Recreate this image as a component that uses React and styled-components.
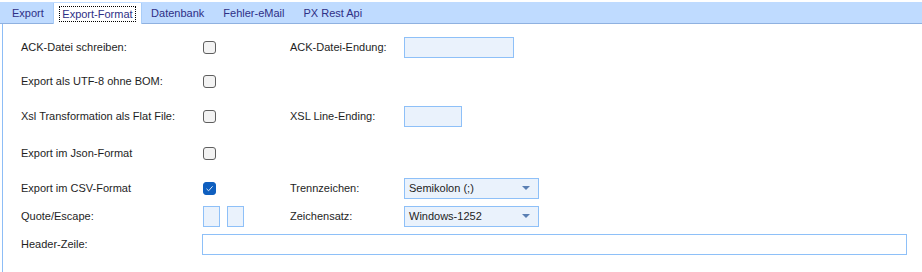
import React from 'react';
import styled, { createGlobalStyle } from 'styled-components';

const GlobalStyle = createGlobalStyle`
    html, body {
        margin:0;
        padding:0;
        background:#fff;
    }
    body {
        font-family: 'Liberation Sans', Arial, sans-serif;
        font-size:11px;
        color:#1e1e1e;
    }
`;

const tabs = ['Export', 'Export-Format', 'Datenbank', 'Fehler-eMail', 'PX Rest Api'];

const Checkbox = ({ checked }) => (
    <CheckBox checked={checked}>
        {checked && (
            <svg width="9" height="9" viewBox="0 0 9 9">
                <path d="M1.5 4.8 L3.6 6.8 L7.6 2.3" fill="none" stroke="#dbe8f8" strokeWidth="1" />
            </svg>
        )}
    </CheckBox>
);

const Select = ({ value }) => (
    <SelectBox>
        <span>{value}</span>
        <Arrow />
    </SelectBox>
);

const App = () => {
    return (
        <Page>
            <GlobalStyle />
            <TabStrip>
                {tabs.map((t) => (
                    <Tab key={t} active={t === 'Export-Format'}>
                        <TabLabel active={t === 'Export-Format'}>{t}</TabLabel>
                    </Tab>
                ))}
            </TabStrip>
            <Panel>
                <Form>
                    <Label>ACK-Datei schreiben:</Label>
                    <Cell><Checkbox /></Cell>
                    <Label>ACK-Datei-Endung:</Label>
                    <Cell><TextBox width="110px" /></Cell>

                    <Label>Export als UTF-8 ohne BOM:</Label>
                    <Cell><Checkbox /></Cell>
                    <span />
                    <span />

                    <Label>Xsl Transformation als Flat File:</Label>
                    <Cell><Checkbox /></Cell>
                    <Label>XSL Line-Ending:</Label>
                    <Cell><TextBox width="58px" /></Cell>

                    <Label>Export im Json-Format</Label>
                    <Cell><Checkbox /></Cell>
                    <span />
                    <span />

                    <Label>Export im CSV-Format</Label>
                    <Cell><Checkbox checked /></Cell>
                    <Label>Trennzeichen:</Label>
                    <Cell><Select value="Semikolon (;)" /></Cell>

                    <Label>Quote/Escape:</Label>
                    <Cell>
                        <SmallBoxes>
                            <TextBox width="17px" />
                            <TextBox width="17px" />
                        </SmallBoxes>
                    </Cell>
                    <Label>Zeichensatz:</Label>
                    <Cell><Select value="Windows-1252" /></Cell>

                    <Label>Header-Zeile:</Label>
                    <WideCell><TextBox width="705px" white /></WideCell>
                </Form>
            </Panel>
        </Page>
    );
};

const Page = styled.div`
    width:922px;
    height:272px;
    display:flex;
    flex-direction:column;
    overflow:hidden;
`;
const TabStrip = styled.div`
    margin-top:2px;
    height:21px;
    padding-left:2.5px;
    display:flex;
    align-items:stretch;
    background:#bfdbff;
    border-bottom:1px solid #8fb1e0;
`;
const Tab = styled.div`
    padding:0 9px;
    padding:0 ${props => props.active ? '9px' : '9.5px'};
    display:flex;
    align-items:center;
    color:#2e2f86;
    background:${props => props.active ? '#fff' : 'transparent'};
    border-left:${props => props.active ? '1px solid #a9cdf8' : 'none'};
    border-right:${props => props.active ? '1px solid #a9cdf8' : 'none'};
    margin:${props => props.active ? '1px 0 -1px 0' : '0'};
`;
const TabLabel = styled.span`
    padding:${props => props.active ? '1px 2px' : '0'};
    margin:${props => props.active ? '0 -3px' : '0'};
    outline:${props => props.active ? '1px dotted #000' : 'none'};
`;
const Panel = styled.div`
    flex:1;
    margin-left:2px;
    border-left:1px solid #8dbdf6;
    padding-top:6px;
`;
const Form = styled.div`
    display:grid;
    grid-template-columns:182px 87px 114px 1fr;
    grid-template-rows:34px 34px 36px 38px 32px 24px 32px;
    padding-left:18px;
`;
const Label = styled.div`
    display:flex;
    align-items:center;
    white-space:nowrap;
`;
const Cell = styled.div`
    display:flex;
    align-items:center;
`;
const WideCell = styled.div`
    grid-column:2 / span 3;
    display:flex;
    align-items:center;
    margin-left:-1px;
`;
const CheckBox = styled.div`
    width:11px;
    height:11px;
    border-radius:3px;
    border:1px solid ${props => props.checked ? '#0f5fbf' : '#5f5f5f'};
    background:${props => props.checked ? '#0f5fbf' : '#f3f3f3'};
    display:flex;
    align-items:center;
    justify-content:center;
`;
const TextBox = styled.div`
    box-sizing:border-box;
    width:${props => props.width};
    height:21px;
    border:1px solid #8ec0f8;
    background:${props => props.white ? '#fff' : '#eaf2fc'};
`;
const SmallBoxes = styled.div`
    display:flex;
    gap:7px;
`;
const SelectBox = styled.div`
    box-sizing:border-box;
    width:135px;
    height:21px;
    border:1px solid #8ec0f8;
    background:#eaf2fc;
    display:flex;
    align-items:center;
    justify-content:space-between;
    padding:0 8px 0 4px;
    color:#1e1e1e;
`;
const Arrow = styled.span`
    width:0;
    height:0;
    border-left:4px solid transparent;
    border-right:4px solid transparent;
    border-top:4px solid #5a7fb3;
`;

export default App;
